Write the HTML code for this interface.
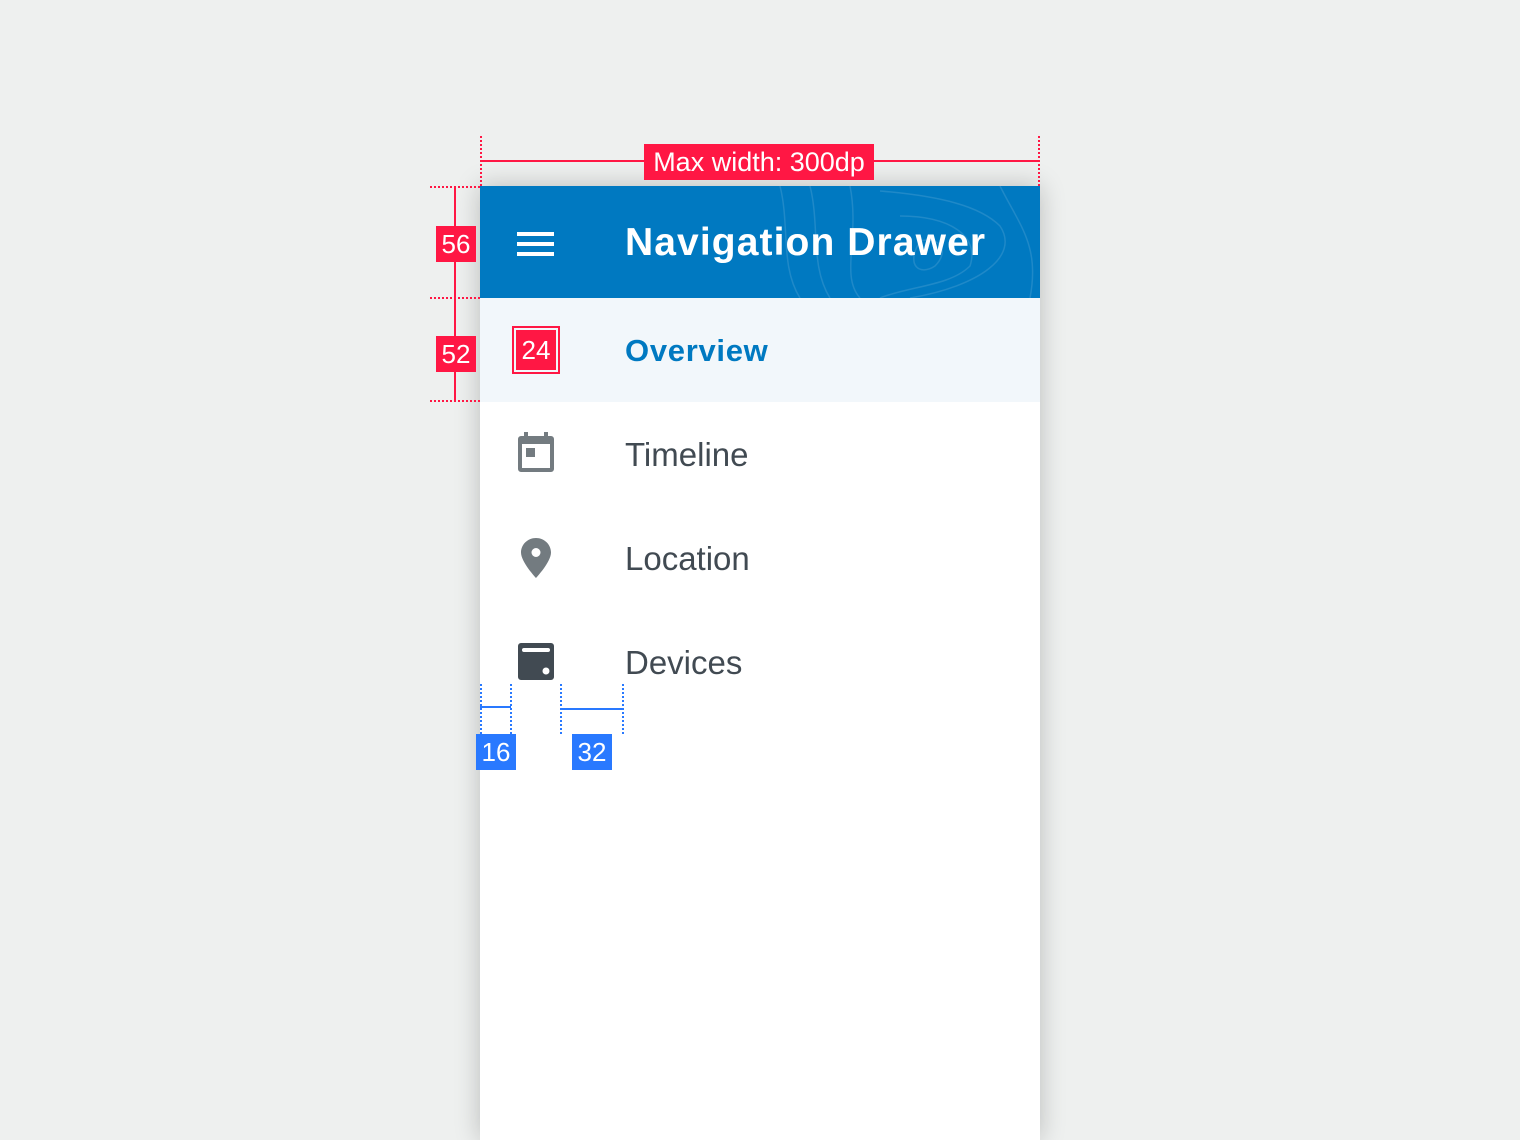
<!DOCTYPE html>
<html><head><meta charset="utf-8"><style>
body{margin:0;width:1520px;height:1140px;background:#eef0ef;position:relative;overflow:hidden;font-family:"Liberation Sans",sans-serif}
.abs{position:absolute}
.panel{left:480px;top:186px;width:560px;height:954px;background:#fff;box-shadow:0 0 24px rgba(0,0,0,.22)}
.hdr{left:480px;top:186px;width:560px;height:112px;background:#0079c1;overflow:hidden}
.title{left:625px;top:221px;font-size:39px;font-weight:bold;color:#fff;white-space:nowrap;letter-spacing:1.1px}
.item{left:625px;font-size:33px;color:#414a52}
.red{background:#ff1744;color:#fff;font-size:26px;line-height:36px;text-align:center}
.blue{background:#2979ff;color:#fff;font-size:26px;line-height:36px;text-align:center}
</style></head><body>
<div class="abs panel"></div>
<div class="abs hdr">
<svg width="560" height="112" style="position:absolute;left:0;top:0" fill="none" stroke="rgba(255,255,255,0.12)" stroke-width="1.5">
<path d="M300 0 C310 40 300 80 320 112"/><path d="M330 0 C340 40 330 80 350 112"/>
<path d="M400 5 C460 10 500 20 520 40 C540 70 500 100 430 112"/>
<path d="M420 30 C470 30 500 50 490 80 C470 100 430 100 400 112"/>
<path d="M440 55 C460 50 470 65 455 80 C440 90 425 80 440 55"/>
<path d="M520 0 C540 40 560 60 550 112"/><path d="M370 0 C380 50 360 90 380 112"/>
</svg>
<div style="position:absolute;left:37px;top:46px;width:37px;height:4px;background:#fff"></div>
<div style="position:absolute;left:37px;top:56px;width:37px;height:4px;background:#fff"></div>
<div style="position:absolute;left:37px;top:66px;width:37px;height:4px;background:#fff"></div>
</div>
<div class="abs title">Navigation Drawer</div>
<div class="abs" style="left:480px;top:298px;width:560px;height:104px;background:#f2f7fb"></div>
<div class="abs item" style="top:333px;color:#0079c1;font-weight:bold;font-size:31px;letter-spacing:0.7px">Overview</div>
<div class="abs item" style="top:436px">Timeline</div>
<div class="abs item" style="top:540px">Location</div>
<div class="abs item" style="top:644px">Devices</div>
<svg class="abs" style="left:518px;top:432px" width="36" height="40" viewBox="0 0 36 40"><path fill="#737b80" d="M6 0h4v4h16V0h4v4h3a3 3 0 0 1 3 3v30a3 3 0 0 1-3 3H3a3 3 0 0 1-3-3V7a3 3 0 0 1 3-3h3zM4 12v24h28V12zM8 16h9v9H8z"/></svg>
<svg class="abs" style="left:521px;top:538px" width="30" height="40" viewBox="0 0 30 40"><path fill="#737b80" d="M15 0C6.7 0 0 6.5 0 14.5 0 24 15 40 15 40s15-16 15-25.5C30 6.5 23.3 0 15 0zm0 10a4.5 4.5 0 1 1 0 9 4.5 4.5 0 0 1 0-9z"/></svg>
<svg class="abs" style="left:518px;top:643px" width="36" height="37" viewBox="0 0 36 37"><path fill="#414a52" fill-rule="evenodd" d="M3 0h30a3 3 0 0 1 3 3v31a3 3 0 0 1-3 3H3a3 3 0 0 1-3-3V3a3 3 0 0 1 3-3zM6 5a2 2 0 0 0 0 4h24a2 2 0 0 0 0-4zM28 24.5a3.5 3.5 0 1 0 0 7 3.5 3.5 0 0 0 0-7z"/></svg>
<div class="abs" style="left:480px;top:136px;height:50px;border-left:2px dotted #ff1744"></div>
<div class="abs" style="left:1038px;top:136px;height:50px;border-left:2px dotted #ff1744"></div>
<div class="abs" style="left:481px;top:160px;width:558px;height:2px;background:#ff1744"></div>
<div class="abs red" style="left:644px;top:144px;width:230px;font-size:27px">Max width: 300dp</div>
<div class="abs" style="left:430px;top:186px;width:50px;border-top:2px dotted #ff1744"></div>
<div class="abs" style="left:430px;top:297px;width:50px;border-top:2px dotted #ff1744"></div>
<div class="abs" style="left:430px;top:400px;width:50px;border-top:2px dotted #ff1744"></div>
<div class="abs" style="left:454px;top:187px;width:2px;height:214px;background:#ff1744"></div>
<div class="abs red" style="left:436px;top:226px;width:40px">56</div>
<div class="abs red" style="left:436px;top:336px;width:40px">52</div>
<div class="abs" style="left:512px;top:326px;width:44px;height:44px;border:2px solid #ff1744"></div>
<div class="abs red" style="left:516px;top:330px;width:40px;height:40px;line-height:40px">24</div>
<div class="abs" style="left:480px;top:684px;height:50px;border-left:2px dotted #2979ff"></div>
<div class="abs" style="left:510px;top:684px;height:50px;border-left:2px dotted #2979ff"></div>
<div class="abs" style="left:480px;top:706px;width:31px;height:2px;background:#2979ff"></div>
<div class="abs" style="left:560px;top:684px;height:50px;border-left:2px dotted #2979ff"></div>
<div class="abs" style="left:622px;top:684px;height:50px;border-left:2px dotted #2979ff"></div>
<div class="abs" style="left:561px;top:708px;width:62px;height:2px;background:#2979ff"></div>
<div class="abs blue" style="left:476px;top:734px;width:40px">16</div>
<div class="abs blue" style="left:572px;top:734px;width:40px">32</div>
</body></html>
